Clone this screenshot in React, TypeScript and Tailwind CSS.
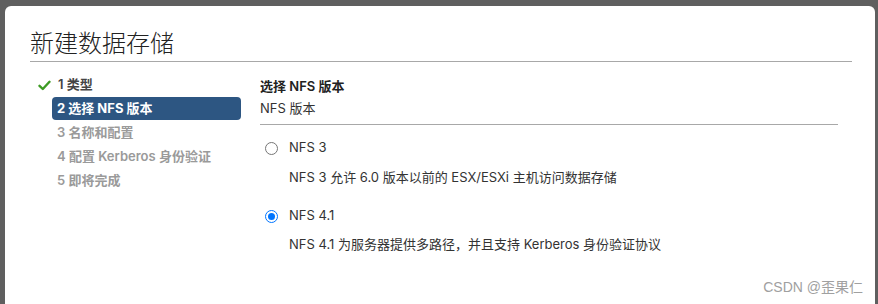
import React from "react";

const font = { fontFamily: '"Inter", "Noto Sans CJK SC", sans-serif' };

function Check() {
  return (
    <svg width="13" height="11" viewBox="0 0 13 11" className="shrink-0">
      <path d="M1.5 5.8 L4.8 9 L11.5 1.8" fill="none" stroke="#3d9b24" strokeWidth="2.4" strokeLinecap="round" strokeLinejoin="round" />
    </svg>
  );
}

export default function App() {
  return (
    <div className="w-[878px] h-[304px] overflow-hidden bg-[#5f5f5f] flex pl-[5px] pt-[6px] pr-[3px]" style={font}>
      <div className="flex-1 bg-white rounded-t-[6px] pl-[25px] pr-[23px] pt-[22px] flex flex-col relative">
        <div className="text-[24px] leading-[32px] font-light text-[#222]">新建数据存储</div>
        <div className="h-px bg-[#a8a8a8] mt-[1px]" />
        <div className="flex mt-[11px]">
          <div className="w-[230px] shrink-0 flex flex-col text-[13px] font-semibold">
            <div className="h-[24px] flex items-center pl-[8px] gap-[7px] text-[#444]">
              <Check />
              <span>1 类型</span>
            </div>
            <div className="h-[23px] w-[189px] flex items-center ml-[22px] pl-[5px] rounded-[4px] bg-[#2d5682] text-white font-bold">
              2 选择 NFS 版本
            </div>
            <div className="h-[24px] flex items-center pl-[27px] text-[#9a9a9a] mt-px">3 名称和配置</div>
            <div className="h-[24px] flex items-center pl-[27px] text-[#9a9a9a]">4 配置 Kerberos 身份验证</div>
            <div className="h-[24px] flex items-center pl-[27px] text-[#9a9a9a]">5 即将完成</div>
          </div>
          <div className="flex-1 flex flex-col pr-[14px] text-[13px] text-[#333]">
            <div className="h-[22px] flex items-center font-semibold text-[#222] mt-[3px]">选择 NFS 版本</div>
            <div className="h-[22px] flex items-center">NFS 版本</div>
            <div className="h-px bg-[#a8a8a8] mt-[4px]" />
            <label className="flex items-center h-[24px] mt-[11px] pl-[5px] gap-[11px]">
              <span className="w-[13px] h-[13px] rounded-full border border-[#767676] bg-white" />
              <span>NFS 3</span>
            </label>
            <div className="h-[22px] flex items-center pl-[29px] mt-[7px]">NFS 3 允许 6.0 版本以前的 ESX/ESXi 主机访问数据存储</div>
            <label className="flex items-center h-[24px] mt-[15px] pl-[5px] gap-[11px]">
              <span className="w-[13px] h-[13px] rounded-full border-[1.5px] border-[#0075ff] bg-white flex items-center justify-center">
                <span className="w-[7px] h-[7px] rounded-full bg-[#0075ff]" />
              </span>
              <span>NFS 4.1</span>
            </label>
            <div className="h-[22px] flex items-center pl-[29px] mt-[6px]">NFS 4.1 为服务器提供多路径，并且支持 Kerberos 身份验证协议</div>
          </div>
        </div>
        <div className="absolute right-[12px] bottom-[6px] text-[14px] text-[#a0a0a0]" style={{ fontFamily: '"Liberation Sans", "Noto Sans CJK SC", sans-serif' }}>
          CSDN @歪果仁
        </div>
      </div>
    </div>
  );
}
